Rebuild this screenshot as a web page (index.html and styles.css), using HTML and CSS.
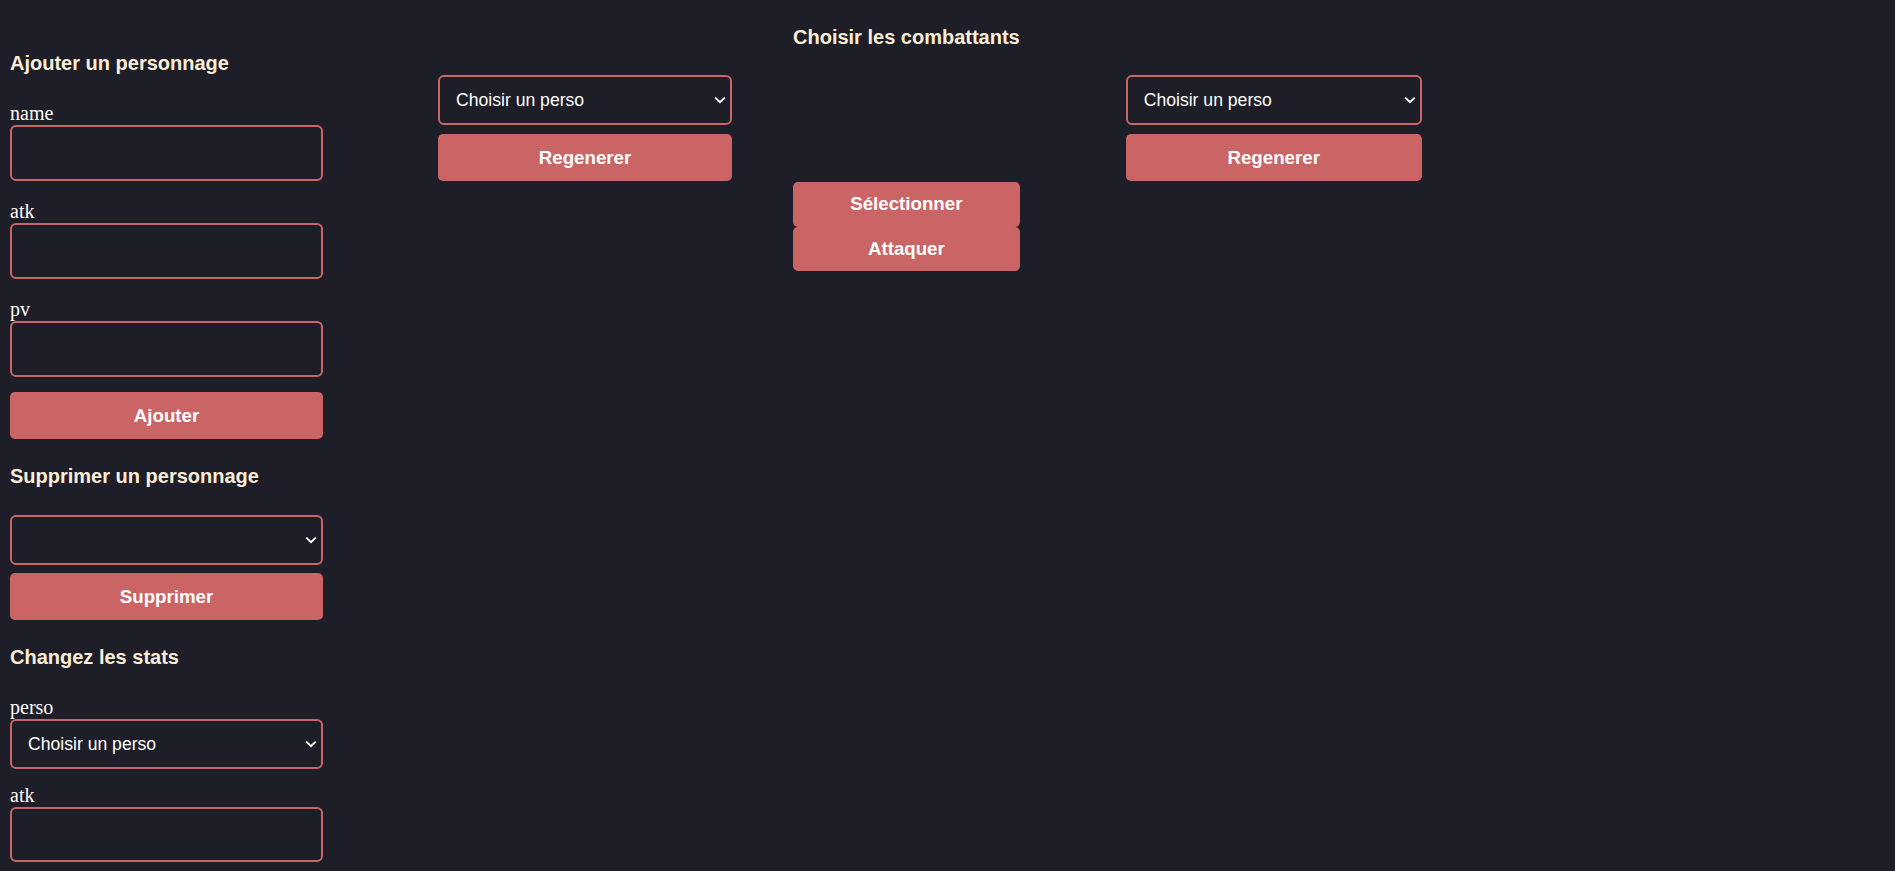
FILE: index.html
```html
<!DOCTYPE html>
<html lang="fr">
<head>
<meta charset="utf-8">
<title>Combat</title>
<link rel="stylesheet" href="styles.css">
</head>
<body>
<div class="page">
  <aside class="sidebar">
    <section class="block">
      <h2 class="title">Ajouter un personnage</h2>
      <form class="form">
        <div class="field">
          <label class="label" for="name">name</label>
          <input class="input" id="name" type="text">
        </div>
        <div class="field">
          <label class="label" for="atk">atk</label>
          <input class="input" id="atk" type="text">
        </div>
        <div class="field">
          <label class="label" for="pv">pv</label>
          <input class="input" id="pv" type="text">
        </div>
        <button class="btn btn-form" type="button">Ajouter</button>
      </form>
    </section>
    <section class="block">
      <h2 class="title">Supprimer un personnage</h2>
      <div class="stack">
        <select class="select"><option></option></select>
        <button class="btn" type="button">Supprimer</button>
      </div>
    </section>
    <section class="block">
      <h2 class="title">Changez les stats</h2>
      <div class="field">
        <label class="label" for="perso">perso</label>
        <select class="select" id="perso"><option>Choisir un perso</option></select>
      </div>
      <div class="field field-tight">
        <label class="label" for="atk2">atk</label>
        <input class="input input-last" id="atk2" type="text">
      </div>
    </section>
  </aside>

  <main class="arena">
    <div class="fighter fighter-left">
      <select class="select"><option>Choisir un perso</option></select>
      <button class="btn" type="button">Regenerer</button>
    </div>
    <div class="center">
      <h2 class="title">Choisir les combattants</h2>
      <div class="actions">
        <button class="btn btn-action" type="button">Sélectionner</button>
        <button class="btn btn-action" type="button">Attaquer</button>
      </div>
    </div>
    <div class="fighter fighter-right">
      <select class="select"><option>Choisir un perso</option></select>
      <button class="btn" type="button">Regenerer</button>
    </div>
  </main>
</div>
</body>
</html>
```

FILE: styles.css
```css
* {
  box-sizing: border-box;
}

html, body {
  margin: 0;
  padding: 0;
  background: #1e1e28;
  height: 100%;
  overflow: hidden;
}

body {
  font-family: "Liberation Serif", "Times New Roman", serif;
  color: #ffffff;
}

.page {
  display: flex;
  align-items: flex-start;
  padding-left: 10px;
}

.sidebar {
  width: 313px;
  padding-top: 52px;
  display: flex;
  flex-direction: column;
}

.block + .block {
  margin-top: 26px;
}

.title {
  margin: 0 0 27px 0;
  font-family: "Liberation Sans", Arial, sans-serif;
  font-size: 20px;
  font-weight: bold;
  line-height: 23px;
  color: #fbeed8;
  white-space: nowrap;
}

.form {
  display: flex;
  flex-direction: column;
}

.field {
  display: flex;
  flex-direction: column;
}

.field + .field {
  margin-top: 19px;
}

.field.field-tight {
  margin-top: 15px;
}

.label {
  font-family: "Liberation Serif", "Times New Roman", serif;
  font-size: 20px;
  line-height: 23px;
  color: #ffffff;
}

.input {
  width: 100%;
  height: 56px;
  background: transparent;
  border: 2px solid #cb6565;
  border-radius: 6px;
  color: #ffffff;
  font-family: "Liberation Sans", Arial, sans-serif;
  font-size: 17.6px;
  padding: 0 16px;
  outline: none;
}

.input-last {
  height: 55px;
}

.select {
  width: 100%;
  height: 50px;
  -webkit-appearance: none;
  appearance: none;
  background-color: transparent;
  background-image: url("data:image/svg+xml;utf8,<svg xmlns='http://www.w3.org/2000/svg' width='12' height='8' viewBox='0 0 12 8'><path d='M1.2 1.6 L6 6.2 L10.8 1.6' fill='none' stroke='white' stroke-width='2'/></svg>");
  background-repeat: no-repeat;
  background-position: right 4px center;
  border: 2px solid #cb6565;
  border-radius: 6px;
  color: #ffffff;
  font-family: "Liberation Sans", Arial, sans-serif;
  font-size: 17.6px;
  padding: 0 24px 0 16px;
  outline: none;
}

.select option {
  background: #1e1e28;
  color: #ffffff;
}

.btn {
  display: block;
  width: 100%;
  height: 47px;
  border: none;
  border-radius: 5px;
  background: #cb6565;
  color: #ffffff;
  font-family: "Liberation Sans", Arial, sans-serif;
  font-size: 18.7px;
  font-weight: bold;
  cursor: pointer;
  padding: 0;
}

.btn-form {
  margin-top: 15px;
}

.stack {
  display: flex;
  flex-direction: column;
  gap: 8px;
}

.arena {
  display: flex;
  align-items: flex-start;
  margin-left: 115px;
}

.fighter {
  display: flex;
  flex-direction: column;
  gap: 9px;
  margin-top: 75px;
}

.fighter-left {
  width: 294px;
}

.fighter-right {
  width: 296px;
  margin-left: 106px;
}

.center {
  margin-left: 61px;
  padding-top: 26px;
  display: flex;
  flex-direction: column;
}

.center .title {
  margin: 0;
}

.actions {
  margin-top: 133px;
  display: flex;
  flex-direction: column;
}

.btn-action {
  height: 44.5px;
}
```
